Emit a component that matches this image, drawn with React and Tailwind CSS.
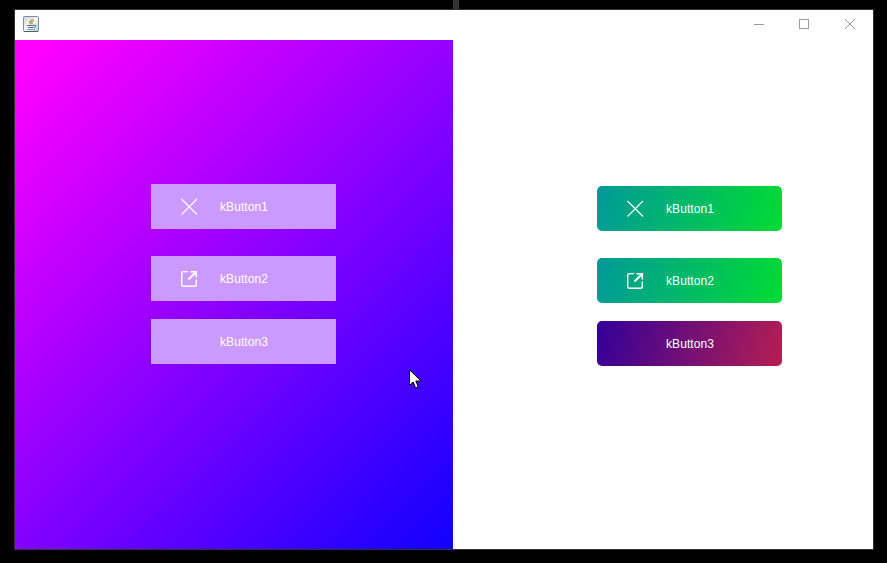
function CrossIcon() {
  return (
    <svg width="17" height="17" viewBox="0 0 17 17" className="shrink-0">
      <path d="M0.500 1L16 16.500M16 1L0.500 16.500" fill="none" stroke="currentColor" strokeWidth="1.1" />
    </svg>
  );
}

function OpenIcon() {
  return (
    <svg width="17" height="17" viewBox="0 0 17 17" className="shrink-0" fill="none" stroke="currentColor">
      <path d="M7 1.600H2.500Q0.700 1.600 0.700 3.400V14.500Q0.700 16.300 2.500 16.300H13.500Q15.300 16.300 15.300 14.500V9.500" strokeWidth="1.4" />
      <path d="M7.500 9.500L14.300 2.700" strokeWidth="2" />
      <path d="M9.500 1.700H15.300V7.500" strokeWidth="1.600" />
    </svg>
  );
}

function JavaIcon() {
  return (
    <svg width="16" height="16" viewBox="0 0 16 16" className="shrink-0">
      <defs>
        <linearGradient id="javaTile" x1="0" y1="0" x2="1" y2="1">
          <stop offset="0" stopColor="#cbd7dc" />
          <stop offset="0.5" stopColor="#f8faf8" />
          <stop offset="1" stopColor="#b9c9d0" />
        </linearGradient>
      </defs>
      <rect x="0.5" y="0.5" width="15" height="15" rx="1.2" fill="url(#javaTile)" stroke="#7d8f99" />
      <path d="M1 15.500H15" stroke="#4c6272" />
      <path d="M10 3L6.500 6.200L8 8.300M11 4.500L8.500 6.500L9.500 8.300" fill="none" stroke="#c49a55" strokeWidth="1.3" />
      <path d="M4 9.500H11.500M5 11.500H10.500M11 9.300C13.500 8.500 13.300 11 11 11.500" fill="none" stroke="#46718f" />
      <path d="M4 13.500H12" stroke="#8aa7b8" />
    </svg>
  );
}

function KButton({ label, icon, className }) {
  return (
    <button className={`flex h-[45px] w-[185px] items-center text-[12px] leading-[14px] tracking-[0.08px] text-white ${className}`}>
      <span className="ml-[30px] mr-[22px] flex h-[17px] w-[17px]">{icon}</span>
      <span>{label}</span>
    </button>
  );
}

export default function App() {
  const green = "rounded-[5px] bg-[linear-gradient(103.7deg,#009999,#00db33)]";
  return (
    <div className="flex h-[563px] w-[887px] flex-col overflow-hidden bg-black font-['Liberation_Sans',Arial,sans-serif]">
      <div className="ml-[453px] h-[9px] w-[6px] shrink-0 bg-[#333333]" />
      <div className="ml-[14px] flex h-[541px] w-[860px] shrink-0 flex-col border border-[#333333] bg-white">
        <header className="flex h-[30px] shrink-0 items-start justify-between pl-2 pt-[6px]">
          <JavaIcon />
          <div className="mr-[17px] mt-[2px] flex gap-[34px] text-[#999999]">
            <svg width="12" height="12" viewBox="0 0 12 12" fill="none" stroke="currentColor">
              <path d="M2 6.500H12" />
            </svg>
            <svg width="12" height="12" viewBox="0 0 12 12" fill="none" stroke="currentColor">
              <rect x="1.500" y="1.500" width="9" height="9" />
            </svg>
            <svg width="12" height="12" viewBox="0 0 12 12" fill="none" stroke="currentColor">
              <path d="M1 1L11 11M11 1L1 11" />
            </svg>
          </div>
        </header>
        <main className="flex min-h-0 flex-1">
          <section className="relative flex w-[438px] flex-col bg-[linear-gradient(135deg,#ff00ff_3%,#1000ff)] pl-[136px] pt-[144px]">
            <KButton label="kButton1" icon={<CrossIcon />} className="bg-[#cc99ff]" />
            <KButton label="kButton2" icon={<OpenIcon />} className="mt-[27px] bg-[#cc99ff]" />
            <KButton label="kButton3" className="mt-[18px] bg-[#cc99ff]" />
            <svg width="13" height="20" viewBox="0 0 13 20" className="absolute left-[394px] top-[329px]">
              <path d="M0.500 0.800V16.500L4.200 13L6.600 18.800L9.200 17.700L6.800 12H12Z" fill="#fff" stroke="#000" />
            </svg>
          </section>
          <section className="flex flex-1 flex-col pl-[144px] pt-[146px]">
            <KButton label="kButton1" icon={<CrossIcon />} className={green} />
            <KButton label="kButton2" icon={<OpenIcon />} className={`mt-[27px] ${green}`} />
            <KButton label="kButton3" className="mt-[18px] rounded-[5px] bg-[linear-gradient(103.7deg,#330099,#b51f52)]" />
          </section>
        </main>
      </div>
    </div>
  );
}
